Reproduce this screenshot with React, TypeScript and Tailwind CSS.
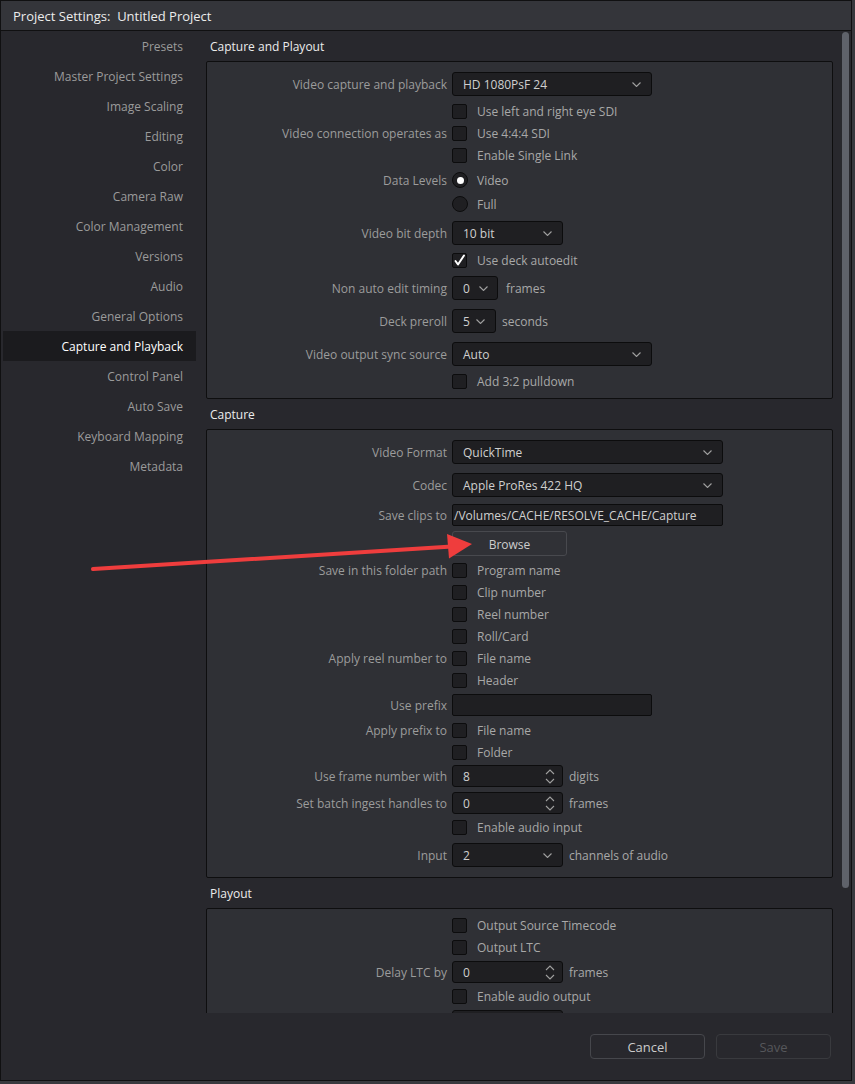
import React from "react";

const Chevron = () => (
  <svg width="9" height="5" viewBox="0 0 9 5" className="shrink-0">
    <path d="M0.5 0.5 L4.5 4.5 L8.5 0.5" fill="none" stroke="#a0a0a0" strokeWidth="1.1" />
  </svg>
);

const Spin = () => (
  <svg width="10" height="15" viewBox="0 0 10 15" className="shrink-0">
    <path d="M1 5 L5 1 L9 5" fill="none" stroke="#a0a0a0" strokeWidth="1.1" />
    <path d="M1 10 L5 14 L9 10" fill="none" stroke="#a0a0a0" strokeWidth="1.1" />
  </svg>
);

function Row({ label, cls, children }: { label?: string; cls: string; children?: React.ReactNode }) {
  return (
    <div className={`flex items-center ${cls}`}>
      <div className="w-[245px] shrink-0 pr-[5px] pt-[2px] text-right text-[#9c9c9c] whitespace-nowrap">{label}</div>
      <div className="flex items-center whitespace-nowrap">{children}</div>
    </div>
  );
}

function Check({ checked, text }: { checked?: boolean; text: string }) {
  return (
    <div className="flex items-center">
      <div className="w-[15px] h-[15px] rounded-[2px] bg-[#1f1f22] border border-[#0c0c0d] flex items-center justify-center">
        {checked && (
          <svg width="13" height="13" viewBox="0 0 13 13">
            <path d="M2.5 7 L5 10.5 L11 1.5" fill="none" stroke="#ffffff" strokeWidth="2" strokeLinecap="round" strokeLinejoin="round" />
          </svg>
        )}
      </div>
      <span className="ml-[10px] pt-[2px] text-[#a8a8a8]">{text}</span>
    </div>
  );
}

function Radio({ on, text }: { on?: boolean; text: string }) {
  return (
    <div className="flex items-center">
      <div className="w-[16px] h-[16px] rounded-full bg-[#1f1f22] border border-[#0c0c0d] flex items-center justify-center">
        {on && <div className="w-[7px] h-[7px] rounded-full bg-white" />}
      </div>
      <span className="ml-[9px] pt-[2px] text-[#a8a8a8]">{text}</span>
    </div>
  );
}

function Select({ w, value, cls }: { w: string; value: string; cls?: string }) {
  return (
    <div className={`${w} ${cls ?? "h-[24px] pr-[10px]"} flex items-center justify-between pl-[10px] rounded-[3px] bg-[#1f1f22] border border-[#0c0c0d] text-[#cfcfcf]`}>
      <span className="pt-[2px]">{value}</span>
      <Chevron />
    </div>
  );
}

function Spinner({ value }: { value: string }) {
  return (
    <div className="w-[111px] h-[22px] flex items-center justify-between pl-[10px] pr-[7px] rounded-[3px] bg-[#1f1f22] border border-[#0c0c0d] text-[#cfcfcf]">
      <span className="pt-[2px]">{value}</span>
      <Spin />
    </div>
  );
}

function Field({ w, value }: { w: string; value?: string }) {
  return (
    <div className={`${w} h-[22px] flex items-center pl-[1px] pt-[2px] rounded-[2px] bg-[#1f1f22] border border-[#0c0c0d] text-[#d0d0d0]`}>
      {value}
    </div>
  );
}

const Suffix = ({ t, cls }: { t: string; cls: string }) => <span className={`${cls} pt-[2px] text-[#a8a8a8]`}>{t}</span>;

const sidebarItems = [
  "Presets",
  "Master Project Settings",
  "Image Scaling",
  "Editing",
  "Color",
  "Camera Raw",
  "Color Management",
  "Versions",
  "Audio",
  "General Options",
  "Capture and Playback",
  "Control Panel",
  "Auto Save",
  "Keyboard Mapping",
  "Metadata",
];

export default function App() {
  return (
    <div className="relative w-[855px] h-[1084px] bg-[#38393e] text-[12px] leading-[16px] [font-family:'Open_Sans','Liberation_Sans',sans-serif] overflow-hidden">
      <div className="w-[852px] h-[1081px] border border-[#101011] bg-[#28282d] flex flex-col">
        {/* Title bar */}
        <div className="h-[30px] shrink-0 bg-[#34353a] border-b border-[#101011] flex items-center pl-[12px]">
          <span className="text-[13px] font-medium text-[#ececec] whitespace-pre">Project Settings:  Untitled Project</span>
        </div>
        <div className="flex flex-1 min-h-0">
          {/* Sidebar */}
          <div className="w-[195px] shrink-0 flex flex-col">
            {sidebarItems.map((s) => {
              const sel = s === "Capture and Playback";
              return (
                <div
                  key={s}
                  className={`h-[30px] ml-[2px] pt-[2px] flex items-center justify-end pr-[13px] whitespace-nowrap ${sel ? "bg-[#1b1b1e] text-white" : "text-[#9b9b9b]"}`}
                >
                  {s}
                </div>
              );
            })}
          </div>
          {/* Main */}
          <div className="flex-1 flex flex-col min-w-0">
            <div className="h-[982px] shrink-0 overflow-hidden flex">
              <div className="w-[627px] ml-[10px] shrink-0 flex flex-col">
                <div className="h-[30px] shrink-0 flex items-center pl-[4px] pt-[2px] text-[#ececec] font-medium">Capture and Playout</div>
                <div className="shrink-0 bg-[#2f3035] border border-[#0e0e0f] rounded-[2px] pt-[10px] pb-[6px]">
                  <Row label="Video capture and playback" cls="h-[24px]">
                    <Select w="w-[200px]" value="HD 1080PsF 24" />
                  </Row>
                  <Row cls="h-[22px] mt-[4px]"><Check text="Use left and right eye SDI" /></Row>
                  <Row label="Video connection operates as" cls="h-[22px]"><Check text="Use 4:4:4 SDI" /></Row>
                  <Row cls="h-[22px]"><Check text="Enable Single Link" /></Row>
                  <Row label="Data Levels" cls="h-[24px] mt-[2px]"><Radio on text="Video" /></Row>
                  <Row cls="h-[24px]"><Radio text="Full" /></Row>
                  <Row label="Video bit depth" cls="h-[24px] mt-[5px]">
                    <Select w="w-[111px]" value="10 bit" />
                  </Row>
                  <Row cls="h-[22px] mt-[4px]"><Check checked text="Use deck autoedit" /></Row>
                  <Row label="Non auto edit timing" cls="h-[24px] mt-[5px]">
                    <Select w="w-[46px]" value="0" cls="h-[24px] pr-[9px]" />
                    <Suffix t="frames" cls="ml-[8px]" />
                  </Row>
                  <Row label="Deck preroll" cls="h-[24px] mt-[9px]">
                    <Select w="w-[44px]" value="5" cls="h-[24px] pr-[10px]" />
                    <Suffix t="seconds" cls="ml-[6px]" />
                  </Row>
                  <Row label="Video output sync source" cls="h-[24px] mt-[9px]">
                    <Select w="w-[200px]" value="Auto" />
                  </Row>
                  <Row cls="h-[22px] mt-[4px]"><Check text="Add 3:2 pulldown" /></Row>
                </div>

                <div className="h-[30px] shrink-0 flex items-center pl-[4px] pt-[2px] text-[#ececec] font-medium">Capture</div>
                <div className="shrink-0 bg-[#2f3035] border border-[#0e0e0f] rounded-[2px] pt-[10px] pb-[10px]">
                  <Row label="Video Format" cls="h-[24px]">
                    <Select w="w-[271px]" value="QuickTime" />
                  </Row>
                  <Row label="Codec" cls="h-[24px] mt-[9px]">
                    <Select w="w-[271px]" value="Apple ProRes 422 HQ" />
                  </Row>
                  <Row label="Save clips to" cls="h-[22px] mt-[7px]">
                    <Field w="w-[271px]" value="/Volumes/CACHE/RESOLVE_CACHE/Capture" />
                  </Row>
                  <Row cls="h-[25px] mt-[5px]">
                    <div className="w-[115px] h-[25px] pt-[2px] rounded-[3px] border border-[#48494e] bg-[#303136] flex items-center justify-center text-[#cdcdcd]">Browse</div>
                  </Row>
                  <Row label="Save in this folder path" cls="h-[22px] mt-[3px]"><Check text="Program name" /></Row>
                  <Row cls="h-[22px]"><Check text="Clip number" /></Row>
                  <Row cls="h-[22px]"><Check text="Reel number" /></Row>
                  <Row cls="h-[22px]"><Check text="Roll/Card" /></Row>
                  <Row label="Apply reel number to" cls="h-[22px]"><Check text="File name" /></Row>
                  <Row cls="h-[22px]"><Check text="Header" /></Row>
                  <Row label="Use prefix" cls="h-[22px] mt-[3px]">
                    <Field w="w-[200px]" />
                  </Row>
                  <Row label="Apply prefix to" cls="h-[22px] mt-[3px]"><Check text="File name" /></Row>
                  <Row cls="h-[22px]"><Check text="Folder" /></Row>
                  <Row label="Use frame number with" cls="h-[22px] mt-[2px]">
                    <Spinner value="8" />
                    <Suffix t="digits" cls="ml-[6px]" />
                  </Row>
                  <Row label="Set batch ingest handles to" cls="h-[22px] mt-[5px]">
                    <Spinner value="0" />
                    <Suffix t="frames" cls="ml-[6px]" />
                  </Row>
                  <Row cls="h-[22px] mt-[2px]"><Check text="Enable audio input" /></Row>
                  <Row label="Input" cls="h-[24px] mt-[5px]">
                    <Select w="w-[111px]" value="2" />
                    <Suffix t="channels of audio" cls="ml-[6px]" />
                  </Row>
                </div>

                <div className="h-[30px] shrink-0 flex items-center pl-[4px] pt-[2px] text-[#ececec] font-medium">Playout</div>
                <div className="shrink-0 bg-[#2f3035] border border-[#0e0e0f] rounded-[2px] pt-[5px] pb-[10px]">
                  <Row cls="h-[22px]"><Check text="Output Source Timecode" /></Row>
                  <Row cls="h-[22px]"><Check text="Output LTC" /></Row>
                  <Row label="Delay LTC by" cls="h-[22px] mt-[3px]">
                    <Spinner value="0" />
                    <Suffix t="frames" cls="ml-[6px]" />
                  </Row>
                  <Row cls="h-[22px] mt-[2px]"><Check text="Enable audio output" /></Row>
                  <Row cls="h-[24px] mt-[3px]">
                    <div className="w-[111px] h-[24px] rounded-[3px] bg-[#1f1f22] border border-[#0c0c0d]" />
                  </Row>
                </div>
              </div>
              {/* Scrollbar */}
              <div className="w-[7px] ml-[9px] shrink-0 pt-[1px]">
                <div className="h-[856px] w-[7px] rounded-full bg-[#5f626a]" />
              </div>
            </div>
            {/* Footer */}
            <div className="flex-1 flex justify-end items-start gap-[11px] pt-[21px] pr-[20px]">
              <div className="w-[115px] h-[25px] rounded-[4px] border border-[#46474c] flex items-center justify-center text-[13px] text-[#cbcbcb]">Cancel</div>
              <div className="w-[115px] h-[25px] rounded-[4px] border border-[#393a3e] flex items-center justify-center text-[13px] text-[#56575b]">Save</div>
            </div>
          </div>
        </div>
      </div>
      {/* Red annotation arrow */}
      <svg className="absolute left-0 top-0 pointer-events-none" width="855" height="1084" viewBox="0 0 855 1084">
        <line x1="93" y1="569" x2="452" y2="546.5" stroke="#ef3d3d" strokeWidth="4" strokeLinecap="round" />
        <polygon points="472,544 447,534 449,558.5" fill="#ef3d3d" />
      </svg>
    </div>
  );
}
